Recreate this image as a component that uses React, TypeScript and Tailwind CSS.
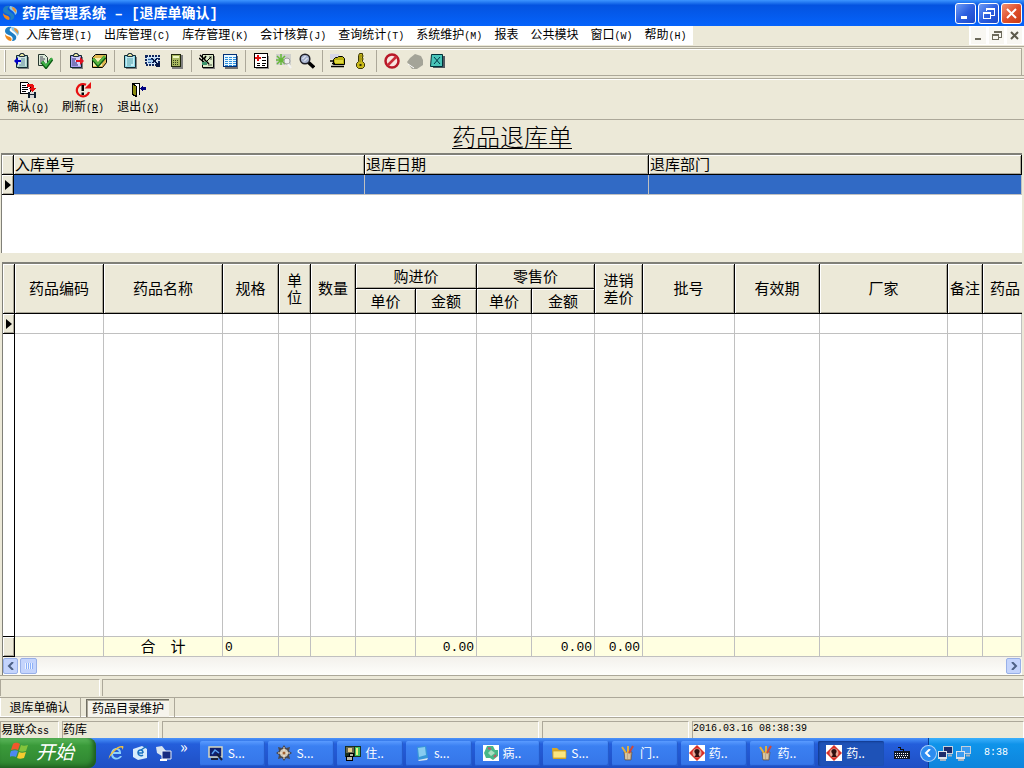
import React from 'react';

interface MenuEntry {
  label: string;
  hotkey?: string;
}

interface Tool {
  name: string;
  icon: React.ReactNode;
}

interface Column {
  key: string;
  title: React.ReactNode;
  total?: string;
  totalClass?: string;
}

const svgProps = { width: 16, height: 16, viewBox: '0 0 16 16', 'aria-hidden': true } as const;

// ---------- icons ----------

const AppLogo = () => (
  <svg {...svgProps}>
    <path d="M8 1C4 0 1 2 1 5c0 3 4 4 6 5 2 1 2 3 1 5 3 0 5-2 4-5-1-2-4-3-6-5C5 4 6 2 8 1z" fill="#1f7fc4" />
    <path d="M8 1c-1 1-1 3 1 4s4 3 4 5c2-1 3-4 1-6C12 2 10 1 8 1z" fill="#8cc8e8" />
    <path d="M1 8c0 4 3 7 6 7 1-1 1-3-1-4-2-1-4-1-5-3z" fill="#f08a1c" />
    <path d="M10 2c3 0 5 3 4 6-1-2-4-3-4-6z" fill="#e8953a" />
  </svg>
);

const Clipboard = ({ fill, children }: { fill: string; children?: React.ReactNode }) => (
  <svg {...svgProps}>
    <path d="M4 4h11v12H4z" fill="#808080" />
    <path d="M2.500 2.500h11v12h-11z" fill={fill} stroke="#102830" />
    <path d="M4 4h8v9H4z" fill="#fff" opacity=".5" />
    <path d="M5.500 3.500v-2h1v-1h3v1h1v2z" fill="#e8e8a0" stroke="#203040" />
    {children}
  </svg>
);

const toolGroups: Tool[][] = [
  [
    {
      name: '入库',
      icon: (
        <Clipboard fill="#a8cfc8">
          <path d="M7 6h4M7 8h4M7 10h4M5 12h6" stroke="#5c8c98" />
          <path d="M0 8l4-4v3h3v2H4v3z" fill="#0000c8" />
        </Clipboard>
      ),
    },
    {
      name: '入库审核',
      icon: (
        <svg {...svgProps}>
          <path d="M1.500 1.500h6l3 3v8h-9z" fill="#dcead8" stroke="#283830" />
          <path d="M3 4h3M3 6h5M3 8h4M3 10h3" stroke="#445" />
          <path d="M5 9l4 5 6-8" fill="none" stroke="#0b5a12" strokeWidth="3.500" />
          <path d="M5 8.500l4 4.500 6-8" fill="none" stroke="#3fb348" strokeWidth="2" />
        </svg>
      ),
    },
  ],
  [
    {
      name: '出库',
      icon: (
        <Clipboard fill="#a8a0f0">
          <path d="M4 6h4M4 8h3M4 10h5M4 12h6" stroke="#202080" />
          <path d="M8 7h4V4l4 4-4 4V9H8z" fill="#e01020" />
        </Clipboard>
      ),
    },
    {
      name: '出库审核',
      icon: (
        <svg {...svgProps}>
          <path d="M1.500 4.500l3-3h11v8l-4 5h-10z" fill="#e0b850" stroke="#000" />
          <path d="M2 5h9v8H2z" fill="#f8efb0" />
          <path d="M2 6l5 6 7-8" fill="none" stroke="#0b5a12" strokeWidth="3.500" />
          <path d="M2 5.500l5 5.500 7-8" fill="none" stroke="#58b840" strokeWidth="2" />
        </svg>
      ),
    },
  ],
  [
    {
      name: '库存',
      icon: (
        <Clipboard fill="#8cd8e8">
          <path d="M5 6h6M5 8h6M5 10h6M5 12h4" stroke="#50a0a8" />
        </Clipboard>
      ),
    },
    {
      name: '盘点',
      icon: (
        <svg {...svgProps} shapeRendering="crispEdges">
          <path d="M1 3h13v9H1z" fill="#d0e4f8" stroke="#102860" strokeWidth="2" strokeDasharray="2 1" />
          <path d="M3 5h8v5H3z" fill="#a8d0f0" />
          <path d="M3 6h4M3 9h3M6 5l6 6" stroke="#3060a0" />
          <path d="M7 5l6 7M12 5l-4 5" stroke="#081848" strokeWidth="1.500" />
          <path d="M11 10h4v4h-4z" fill="#081848" />
        </svg>
      ),
    },
    {
      name: '核算',
      icon: (
        <svg {...svgProps} shapeRendering="crispEdges">
          <path d="M4 2h11v14H4z" fill="#808080" />
          <path d="M3 1h10v13H3z" fill="#20280c" />
          <path d="M4 2h8v11H4z" fill="#a8b860" />
          <path d="M5 3h6v2H5z" fill="#eef8c0" />
          <path d="M5 7h6M5 9h6M5 11h6" stroke="#34401a" strokeDasharray="1 1" />
        </svg>
      ),
    },
  ],
  [
    {
      name: '调价',
      icon: (
        <svg {...svgProps}>
          <path d="M4 3h12v13H4z" fill="#808080" />
          <path d="M3.500 1.500h11v13h-11z" fill="#dcebc8" stroke="#000" />
          <path d="M10 4h3M11 6h2M9 12h4" stroke="#485040" />
          <path d="M1 2l6 6M7 3L5 6l5 5M0 5l6 5" stroke="#000" strokeWidth="1.500" fill="none" />
          <path d="M3 9h5v3H3z" fill="#3d946c" />
          <path d="M8 8l4-4" stroke="#000" />
        </svg>
      ),
    },
    {
      name: '明细表',
      icon: (
        <svg {...svgProps} shapeRendering="crispEdges">
          <path d="M3 3h13v13H3z" fill="#707070" />
          <path d="M1 1h14v13H1z" fill="#003078" />
          <path d="M2 2h12v11H2z" fill="#e8f8ff" />
          <path d="M3 4h3M7 4h3M11 4h3M3 6h3M7 6h3M11 6h3M3 8h3M7 8h3M11 8h3M3 10h3M7 10h3M11 10h3M3 12h3M7 12h3M11 12h3" stroke="#2c90e0" />
        </svg>
      ),
    },
  ],
  [
    {
      name: '新单据',
      icon: (
        <svg {...svgProps} shapeRendering="crispEdges">
          <path d="M3 3h13v13H3z" fill="#909090" />
          <path d="M1.500.5h13v14h-13z" fill="#fff" stroke="#000" />
          <path d="M2 4h6v2H2zM4 2h2v6H4z" fill="#e01010" />
          <path d="M9 4h4M9 7h4M4 10h3M9 10h4M4 12h3M9 12h3" stroke="#000" />
        </svg>
      ),
    },
    {
      name: '查找药品',
      icon: (
        <svg {...svgProps}>
          <path d="M0 1h15v11H0z" fill="#cfd0cc" />
          <path d="M1 3l8 8M9 3l-8 8M5 1v11M0 7h10" stroke="#66b838" strokeWidth="1.500" />
          <circle cx="11" cy="8" r="3" fill="#eee" stroke="#a0a0a0" />
          <path d="M12 11l3 4" stroke="#f4f4f4" strokeWidth="2" />
        </svg>
      ),
    },
    {
      name: '查询',
      icon: (
        <svg {...svgProps}>
          <path d="M9 9l6 5.500" stroke="#000" strokeWidth="3.500" />
          <circle cx="6" cy="6" r="4.800" fill="#a8b4d0" stroke="#202028" strokeWidth="1.500" />
          <path d="M3.500 6l3-3M5 8.500L8.500 5" stroke="#fff" />
        </svg>
      ),
    },
  ],
  [
    {
      name: '打开',
      icon: (
        <svg {...svgProps}>
          <path d="M0 1h9v5H0z" fill="#d8d8e8" />
          <path d="M3.500 6.500l2-2h2l1-1h4l2 2v6h-11z" fill="#b8b010" stroke="#000" />
          <path d="M5 7h8v3H5z" fill="#e0d840" />
          <path d="M0 8h3M2 10.500h3M1 13.500h13" stroke="#000" strokeWidth="1.500" />
        </svg>
      ),
    },
    {
      name: '权限',
      icon: (
        <svg {...svgProps}>
          <path d="M6.500.5h3v8l2 2v3l-2 2h-4l-2-2v-3l2-2v-6z" fill="#c8b818" stroke="#3c3808" />
          <path d="M7 2v7M8 3h3M8 6h3" stroke="#8c8010" />
          <path d="M6.500 11h2v2h-2z" fill="#302c08" />
        </svg>
      ),
    },
  ],
  [
    {
      name: '取消',
      icon: (
        <svg {...svgProps}>
          <circle cx="8" cy="8" r="6.500" fill="#f8e4e0" stroke="#b81828" strokeWidth="2.500" />
          <path d="M3.500 12.500l9-9" stroke="#c82c38" strokeWidth="2.500" />
        </svg>
      ),
    },
    {
      name: '停止',
      icon: (
        <svg {...svgProps}>
          <path d="M0 9l3-4 5-4 6 2 2 4v5l-6 4H5z" fill="#a4a498" />
          <path d="M1 11l6 4" stroke="#fff" />
        </svg>
      ),
    },
    {
      name: '关闭窗口',
      icon: (
        <svg {...svgProps}>
          <path d="M4 3h11v12H3z" fill="#505860" />
          <path d="M1.500 1.500h11v12h-12z" fill="#48c4b8" stroke="#003038" />
          <path d="M4 4l6 7M10 4l-6 7" stroke="#003848" />
        </svg>
      ),
    },
  ],
];

const actions: { label: string; hotkey: string; icon: React.ReactNode }[] = [
  {
    label: '确认',
    hotkey: 'Q',
    icon: (
      <svg {...svgProps} shapeRendering="crispEdges">
        <path d="M.5.5h7l3 3v8H.5z" fill="#fff" stroke="#000" />
        <path d="M2 3h4M2 5h6M2 7h6M2 9h4" stroke="#000" />
        <path d="M7 2h5l2 2v2h2l-4 4-4-4h3V5H7z" fill="#e81010" />
        <path d="M8 10h8v6H8z" fill="#102030" />
        <path d="M10 13h4v3h-4zM10 10h4v2h-4z" fill="#d8d8d8" />
      </svg>
    ),
  },
  {
    label: '刷新',
    hotkey: 'R',
    icon: (
      <svg {...svgProps}>
        <path d="M11 2.800A6.200 6.200 0 1 0 14 10" fill="none" stroke="#e81010" strokeWidth="2.200" />
        <path d="M9.500 6.500H16V0z" fill="#e81010" />
        <path d="M6.500 3H9v6H6.500zM6.500 10.500H9V13H6.500z" fill="#000" />
      </svg>
    ),
  },
  {
    label: '退出',
    hotkey: 'X',
    icon: (
      <svg {...svgProps} shapeRendering="crispEdges">
        <path d="M2.500 12.500v-11h7v11" fill="#fff" stroke="#000" />
        <path d="M2.500 1.500l4 3v10l-4-2z" fill="#8c8c10" stroke="#000" />
        <path d="M10 6l3-3v2h3v3h-3v2z" fill="#000080" />
      </svg>
    ),
  },
];

const PaintCup = () => (
  <svg {...svgProps}>
    <path d="M4 7h8l-1 8H5z" fill="#c0a888" stroke="#604830" strokeWidth=".6" />
    <path d="M6 8L2 2M8 8V1" stroke="#e0b040" strokeWidth="2" />
    <path d="M9 8l4-7" stroke="#d04838" strokeWidth="2" />
    <path d="M6 8v6M9 9v5" stroke="#f0e0b8" />
  </svg>
);

const RedDiamond = () => (
  <svg {...svgProps}>
    <path d="M0 0h16v16H0z" fill="#fff" />
    <path d="M8 0l8 8-8 8-8-8z" fill="#d83028" />
    <circle cx="8" cy="8" r="4.500" fill="#e8a898" />
    <path d="M8 4c3 0 3 3 2 4s0 3 1 4H5c2-1 2-3 1-4s-1-4 2-4z" fill="#301010" />
  </svg>
);

const tasks: { label: string; icon: React.ReactNode; active?: boolean }[] = [
  {
    label: 'S...',
    icon: (
      <svg {...svgProps}>
        <path d="M1 2h13v10H1z" fill="#10206c" stroke="#d8d8c0" strokeWidth="1.500" />
        <path d="M4 9l3-4 4 3" stroke="#58a0f0" fill="none" strokeWidth="1.500" />
        <path d="M9 9l5 6M3 14h7" stroke="#182038" strokeWidth="2" />
      </svg>
    ),
  },
  {
    label: 'S...',
    icon: (
      <svg {...svgProps}>
        <path d="M8 0l2 3 4-1-1 4 3 2-3 2 1 4-4-1-2 3-2-3-4 1 1-4-3-2 3-2-1-4 4 1z" fill="#484850" />
        <circle cx="8" cy="8" r="4" fill="#d0c8b8" />
        <path d="M8 2v12M2 8h12" stroke="#f8e8d0" />
        <circle cx="8" cy="8" r="1.500" fill="#a06030" />
      </svg>
    ),
  },
  {
    label: '住..',
    icon: (
      <svg {...svgProps} shapeRendering="crispEdges">
        <path d="M0 1h16v11H0z" fill="#183020" />
        <path d="M10 2h5v9h-5z" fill="#40c060" />
        <path d="M11 3h2v7h-2z" fill="#f0f080" />
        <path d="M1 2h8v6H1z" fill="#686850" />
        <path d="M3 3h4v4H3z" fill="#e8d090" />
        <path d="M4 8h4v3H4zM1 11h6v4H1z" fill="#b8b8a8" stroke="#000" />
      </svg>
    ),
  },
  {
    label: 's...',
    icon: (
      <svg {...svgProps}>
        <path d="M3 2l9-1 2 12-10 2z" fill="#3898d8" />
        <path d="M4 3l7-1 1 8-7 2z" fill="#88ccf0" />
        <path d="M4 15l10-2-1 2-8 1z" fill="#d8e8f0" />
      </svg>
    ),
  },
  {
    label: '病..',
    icon: (
      <svg {...svgProps}>
        <path d="M0 0h16v16H0z" fill="#fff" />
        <path d="M4 1h6l2 4h3v6l-5 4-3-2H3L1 8z" fill="#48b888" />
        <path d="M5 8l3-3 4 3-4 3z" fill="#a8e0c0" />
        <path d="M5 3l3 1M11 12l2-2" stroke="#c05868" strokeWidth="2" />
      </svg>
    ),
  },
  {
    label: 'S...',
    icon: (
      <svg {...svgProps}>
        <path d="M1 3h5l2 2h7v9H2z" fill="#d8a828" />
        <path d="M2 6h13v7H2z" fill="#fbe580" stroke="#c89820" strokeWidth=".7" />
      </svg>
    ),
  },
  { label: '门..', icon: <PaintCup /> },
  { label: '药..', icon: <RedDiamond /> },
  { label: '药..', icon: <PaintCup /> },
  { label: '药..', icon: <RedDiamond />, active: true },
];

const NetworkIcon = ({ screen }: { screen: string }) => (
  <svg {...svgProps}>
    <path d="M5 1h10v8H5z" fill="#c4d0dc" />
    <path d="M6 2h8v6H6z" fill={screen} />
    <path d="M0 6h9v8H0z" fill="#dce4ec" />
    <path d="M1 7h7v5H1z" fill={screen} />
    <path d="M10 10.500h4M2 15h6" stroke="#a8b4c0" strokeWidth="2" />
  </svg>
);

// ---------- data ----------

const menus: MenuEntry[] = [
  { label: '入库管理', hotkey: 'I' },
  { label: '出库管理', hotkey: 'C' },
  { label: '库存管理', hotkey: 'K' },
  { label: '会计核算', hotkey: 'J' },
  { label: '查询统计', hotkey: 'T' },
  { label: '系统维护', hotkey: 'M' },
  { label: '报表' },
  { label: '公共模块' },
  { label: '窗口', hotkey: 'W' },
  { label: '帮助', hotkey: 'H' },
];

const columns: Column[] = [
  { key: 'code', title: '药品编码' },
  { key: 'name', title: '药品名称', total: '合　计', totalClass: 'text-center' },
  { key: 'spec', title: '规格', total: '0', totalClass: 'text-left' },
  { key: 'unit', title: <>单<br />位</> },
  { key: 'qty', title: '数量' },
  { key: 'buyPrice', title: '单价' },
  { key: 'buyAmount', title: '金额', total: '0.00', totalClass: 'text-right' },
  { key: 'sellPrice', title: '单价' },
  { key: 'sellAmount', title: '金额', total: '0.00', totalClass: 'text-right' },
  { key: 'diff', title: <>进销<br />差价</>, total: '0.00', totalClass: 'text-right' },
  { key: 'batch', title: '批号' },
  { key: 'expiry', title: '有效期' },
  { key: 'factory', title: '厂家' },
  { key: 'remark', title: '备注' },
  { key: 'drug', title: '药品' },
];

const gridFont = "font-['Liberation_Sans','Noto_Sans_CJK_SC',sans-serif] text-[15px]";
const headCell =
  'border-r border-b border-black bg-[#ece9d8] p-0 font-normal leading-[17px] shadow-[inset_1px_1px_0_#fff,inset_-1px_-1px_0_#aca899]';
const bodyCell = 'border-r border-b border-[#c0c0c0] p-0';

const HotKey = ({ children, underline }: { children: string; underline?: boolean }) => (
  <span className="font-['Liberation_Mono',monospace] text-[10px] leading-none">
    (<span className={underline ? 'underline' : ''}>{children}</span>)
  </span>
);

const RowPointer = () => (
  <svg width="6" height="10" viewBox="0 0 6 10" className="mx-auto" aria-hidden="true">
    <path d="M0 0l6 5-6 5z" fill="#000" />
  </svg>
);

// ---------- sections ----------

const TitleBar = () => {
  const button =
    'flex size-[21px] items-center justify-center rounded-[3px] border border-white bg-linear-to-br from-[#6f9bf5] via-[#2d5fe0] to-[#1c48c8]';
  return (
    <header className="flex h-[26px] shrink-0 items-center bg-linear-to-b from-[#3d95ff] via-[#0453e0] via-20% to-[#0563fb] pr-0.5 pl-0.5 text-white">
      <AppLogo />
      <h1 className="ml-1 flex-1 pb-0.5 text-sm leading-5 font-bold whitespace-pre">
        药库管理系统
        <span className="font-['Liberation_Mono',monospace] leading-none">{' – ['}</span>
        退库单确认
        <span className="font-['Liberation_Mono',monospace] leading-none">]</span>
      </h1>
      <div className="flex gap-0.5">
        <button type="button" aria-label="最小化" className={button}>
          <svg width="15" height="15" viewBox="0 0 15 15"><path d="M3 10h6v3H3z" fill="#fff" /></svg>
        </button>
        <button type="button" aria-label="还原" className={button}>
          <svg width="15" height="15" viewBox="0 0 15 15" shapeRendering="crispEdges">
            <path d="M5 2h8v7h-3M5 2v3M5 3h8" fill="none" stroke="#fff" />
            <path d="M2.500 6.500h7v6h-7zM2 7h8" fill="none" stroke="#fff" />
          </svg>
        </button>
        <button
          type="button"
          aria-label="关闭"
          className="flex size-[21px] items-center justify-center rounded-[3px] border border-white bg-linear-to-br from-[#f09070] via-[#e0502c] to-[#c83a10]"
        >
          <svg width="15" height="15" viewBox="0 0 15 15"><path d="M3 3l9 9M12 3l-9 9" stroke="#fff" strokeWidth="2" /></svg>
        </button>
      </div>
    </header>
  );
};

const MenuBar = () => {
  const button = 'flex h-[17px] w-[15px] items-center justify-center bg-[#f8f7f2]';
  return (
    <div className="flex h-[19px] shrink-0 justify-between">
      <nav className="flex items-start bg-white pl-1">
        <AppLogo />
        {menus.map((menu) => (
          <button key={menu.label} type="button" className="px-1.5 leading-4 whitespace-nowrap">
            {menu.label}
            {menu.hotkey && <HotKey>{menu.hotkey}</HotKey>}
          </button>
        ))}
      </nav>
      <div className="flex items-center gap-[3px] bg-white px-0.5">
        <button type="button" aria-label="最小化子窗口" className={button}>
          <svg width="11" height="11" viewBox="0 0 11 11"><path d="M2 8h6v2H2z" fill="#6c6a5c" /></svg>
        </button>
        <button type="button" aria-label="还原子窗口" className={button}>
          <svg width="11" height="11" viewBox="0 0 11 11" shapeRendering="crispEdges">
            <path d="M3 1h7v6H8M3 1v2M3 2h7" fill="none" stroke="#6c6a5c" />
            <path d="M1 4.500h6.500v5H1zM1 5.500h6" fill="none" stroke="#6c6a5c" />
          </svg>
        </button>
        <button type="button" aria-label="关闭子窗口" className={button}>
          <svg width="11" height="11" viewBox="0 0 11 11"><path d="M2 2l7 7M9 2l-7 7" stroke="#5c5a4c" strokeWidth="2" /></svg>
        </button>
      </div>
    </div>
  );
};

const ToolBar = () => (
  <div className="mt-px shrink-0 border-y border-[#aca899]">
    <div className="mt-px mr-0.5 flex h-[27px] items-center border-t border-r border-[#aca899] pb-0.5 pl-1 shadow-[inset_0_1px_0_#fff]">
      <div className="mr-1 h-[22px] w-0.5 border-r border-[#aca899] bg-white" />
      {toolGroups.map((group, index) => (
        <React.Fragment key={index}>
          {index > 0 && <div className="mr-[3px] ml-1 h-[22px] w-px bg-[#aca899]" />}
          {group.map((tool) => (
            <button
              key={tool.name}
              type="button"
              aria-label={tool.name}
              className="flex h-[22px] w-[23px] items-center justify-center"
            >
              {tool.icon}
            </button>
          ))}
        </React.Fragment>
      ))}
    </div>
  </div>
);

const ActionBar = () => (
  <div className="mt-0.5 flex h-[42px] shrink-0 gap-[13px] border-y border-[#aca899] pl-[7px] shadow-[inset_0_1px_0_#fff]">
    {actions.map((action) => (
      <button key={action.label} type="button" className="flex flex-col items-center pt-[3px] leading-[15px] whitespace-nowrap">
        {action.icon}
        <span>
          {action.label}
          <HotKey underline>{action.hotkey}</HotKey>
        </span>
      </button>
    ))}
  </div>
);

const OrderGrid = () => (
  <div className="mr-0.5 ml-px h-[100px] shrink-0 border-t-2 border-l border-[#808078] bg-white">
    <table className={`w-full table-fixed border-separate border-spacing-0 ${gridFont}`}>
      <colgroup>
        <col className="w-3" />
        <col className="w-[351px]" />
        <col className="w-[284px]" />
        <col />
      </colgroup>
      <thead>
        <tr className="h-5 text-left">
          <td className={headCell} />
          <th className={`${headCell} pl-px`}>入库单号</th>
          <th className={`${headCell} pl-px`}>退库日期</th>
          <th className={`${headCell} pl-px`}>退库部门</th>
        </tr>
      </thead>
      <tbody>
        <tr className="h-5">
          <td className={headCell}><RowPointer /></td>
          <td className="border-r border-b border-[#c0c0c0] bg-[#316ac5]" />
          <td className="border-r border-b border-[#c0c0c0] bg-[#316ac5]" />
          <td className="border-r border-b border-[#c0c0c0] bg-[#316ac5]" />
        </tr>
      </tbody>
    </table>
  </div>
);

const DetailGrid = () => (
  <div className="mx-0.5 mt-[9px] flex min-h-0 flex-1 flex-col border-t-2 border-l border-[#808078] bg-white">
    <div className="min-h-0 flex-1 overflow-hidden">
      <table className={`h-full w-full table-fixed border-separate border-spacing-0 ${gridFont}`}>
        <colgroup>
          <col className="w-3" />
          <col className="w-[89px]" />
          <col className="w-[119px]" />
          <col className="w-14" />
          <col className="w-8" />
          <col className="w-[45px]" />
          <col className="w-[60px]" />
          <col className="w-[61px]" />
          <col className="w-[55px]" />
          <col className="w-[63px]" />
          <col className="w-12" />
          <col className="w-[92px]" />
          <col className="w-[85px]" />
          <col className="w-32" />
          <col className="w-[35px]" />
          <col />
        </colgroup>
        <thead>
          <tr className="h-[25px]">
            <td rowSpan={2} className={headCell} />
            {columns.slice(0, 5).map((column) => (
              <th key={column.key} rowSpan={2} className={headCell}>{column.title}</th>
            ))}
            <th colSpan={2} className={headCell}>购进价</th>
            <th colSpan={2} className={headCell}>零售价</th>
            {columns.slice(9, 14).map((column) => (
              <th key={column.key} rowSpan={2} className={headCell}>{column.title}</th>
            ))}
            <th
              rowSpan={2}
              className="overflow-hidden border-b border-black bg-[#ece9d8] p-0 pl-[7px] text-left leading-[17px] font-normal whitespace-nowrap shadow-[inset_1px_1px_0_#fff,inset_0_-1px_0_#aca899]"
            >
              药品
            </th>
          </tr>
          <tr className="h-[25px]">
            {columns.slice(5, 9).map((column) => (
              <th key={column.key} className={headCell}>{column.title}</th>
            ))}
          </tr>
        </thead>
        <tbody>
          <tr className="h-5">
            <td className={headCell}><RowPointer /></td>
            {columns.map((column) => (
              <td key={column.key} className={bodyCell} />
            ))}
          </tr>
          <tr>
            <td className="border-r border-b border-black" />
            {columns.map((column) => (
              <td key={column.key} className={bodyCell} />
            ))}
          </tr>
        </tbody>
        <tfoot>
          <tr className="h-5 bg-[#ffffe1]">
            <td className={headCell} />
            {columns.map((column) => (
              <td key={column.key} className={`${bodyCell} px-0.5 leading-4 ${column.totalClass ?? ''}`}>
                {column.key === 'name' ? (
                  column.total
                ) : (
                  <span className="font-['Liberation_Mono',monospace] text-[13px]">{column.total}</span>
                )}
              </td>
            ))}
          </tr>
        </tfoot>
      </table>
    </div>
    <div className="flex h-[18px] shrink-0 items-center gap-0.5 bg-linear-to-b from-[#f3f1ec] to-[#fefefb] pr-px">
      <button type="button" aria-label="向左滚动" className="flex h-4 w-[15px] items-center justify-center rounded-xs border border-[#98b0e8] bg-[#c4d4fc]">
        <svg width="8" height="8" viewBox="0 0 8 8"><path d="M6 0L2 4l4 4" fill="none" stroke="#4d6185" strokeWidth="2" /></svg>
      </button>
      <button type="button" aria-label="滚动滑块" className="flex h-4 w-[17px] items-center justify-center rounded-xs border border-[#98b0e8] bg-[#c4d4fc]">
        <svg width="9" height="6" viewBox="0 0 9 6" shapeRendering="crispEdges"><path d="M1 0v6M3 0v6M5 0v6M7 0v6" stroke="#eef4fe" /><path d="M2 0v6M4 0v6M6 0v6M8 0v6" stroke="#8cb0f8" /></svg>
      </button>
      <button type="button" aria-label="向右滚动" className="ml-auto flex h-4 w-[15px] items-center justify-center rounded-xs border border-[#98b0e8] bg-[#c4d4fc]">
        <svg width="8" height="8" viewBox="0 0 8 8"><path d="M2 0l4 4-4 4" fill="none" stroke="#4d6185" strokeWidth="2" /></svg>
      </button>
    </div>
  </div>
);

const statusPanel = 'h-[17px] border-t border-l border-[#aca899] border-r border-r-white leading-[14px] whitespace-nowrap';

const BottomBars = () => (
  <div className="shrink-0">
    <div className="flex h-[22px] items-center gap-0.5 border-t border-[#aca899] pt-0.5">
      <div className={`${statusPanel} w-[100px]`} />
      <div className={`${statusPanel} flex-1`} />
    </div>
    <div className="flex h-[21px] items-center border-y border-[#aca899] shadow-[inset_0_-1px_0_#fff]">
      <button type="button" className="h-[19px] w-[81px] border-r border-l border-[#aca899] border-l-white pr-0.5 pb-0.5 leading-4">
        退库单确认
      </button>
      <button type="button" className="ml-[5px] h-[18px] w-[83px] border-t border-l border-[#716f64] bg-[#f6f4ec] leading-4 shadow-[inset_1px_1px_0_#aca899]">
        药品目录维护
      </button>
      <div className="ml-[5px] h-[19px] w-px bg-[#aca899]" />
    </div>
    <div className="flex h-5 items-center gap-[3px] pt-0.5">
      <div className={`${statusPanel} w-[59px]`}>
        易联众<span className="font-['Liberation_Mono',monospace] text-[10px] leading-none">ss</span>
      </div>
      <div className={`${statusPanel} w-[97px]`}>药库</div>
      <div className={`${statusPanel} w-[377px]`} />
      <div className={`${statusPanel} w-[147px]`} />
      <div className={`${statusPanel} flex-1 font-['Liberation_Mono',monospace] text-[10px]`}>2016.03.16 08:38:39</div>
    </div>
  </div>
);

const TaskBar = () => (
  <footer className="flex h-[30px] shrink-0 bg-linear-to-b from-[#4c94fa] via-[#245edb] via-20% to-[#1f4fc4] text-white">
    <button
      type="button"
      className="flex w-24 items-center gap-1.5 rounded-r-lg bg-linear-to-b from-[#5cb85c] via-[#3a9a3a] via-25% to-[#2f8430] pb-1 pl-2.5 shadow-[inset_-3px_-2px_4px_#1d5c1f]"
    >
      <svg width="20" height="18" viewBox="0 0 20 18" aria-hidden="true">
        <path d="M3 2c3-2 5-1 7 0L8 8C6 7 4 7 1 8z" fill="#f0582c" />
        <path d="M11 3c2 1 4 1 7 0l-2 6c-3 1-5 1-7 0z" fill="#84c43c" />
        <path d="M1 9c3-1 5-1 7 0l-2 6c-2-1-4-1-7 0z" fill="#4c88f0" />
        <path d="M9 10c2 1 4 1 7 0l-2 6c-3 1-5 1-7 0z" fill="#f8cc30" />
      </svg>
      <span className="text-[19px] leading-6 italic">开始</span>
    </button>
    <div className="flex items-center gap-2 pr-3 pl-3">
      <button type="button" aria-label="浏览器">
        <svg {...svgProps}>
          <path d="M13 9H5c0 4 5 5 7 2h2c-2 5-11 5-11-2 0-8 11-8 10 0zM5 7h6c-1-3-5-3-6 0z" fill="#8cd0fc" />
          <path d="M1 15C-1 11 8 0 15 1c1 1 0 3-1 4 1-4-3-3-7 1s-7 8-6 9z" fill="#f0c040" />
        </svg>
      </button>
      <button type="button" aria-label="邮件">
        <svg {...svgProps}>
          <path d="M1 4l9-3 5 3v9l-9 2-5-3z" fill="#d8ecfc" />
          <path d="M11 8H6c0 3 4 3 5 2M6 8c0-4 5-4 5 0M9 5l6-4" fill="none" stroke="#1870c0" strokeWidth="1.500" />
        </svg>
      </button>
      <button type="button" aria-label="显示桌面">
        <svg {...svgProps}>
          <path d="M0 2l6-1 4 5-4 5-5-3z" fill="#d8e4f0" />
          <path d="M6 6h9v8H6z" fill="#182c80" stroke="#e8f0fc" />
          <path d="M4 15h7" stroke="#fff" strokeWidth="2" />
        </svg>
      </button>
      <span className="self-start text-base leading-4">»</span>
    </div>
    <div className="flex min-w-0 flex-1 items-center gap-[3px]">
      {tasks.map((task, index) => (
        <button
          key={index}
          type="button"
          className={`flex h-[25px] min-w-0 flex-1 items-center gap-1 rounded-xs pl-2 whitespace-nowrap ${
            task.active
              ? 'bg-[#1e52b7] shadow-[inset_1px_1px_2px_#123a8c]'
              : 'bg-linear-to-b from-[#5a9bff] via-[#3b80f2] via-20% to-[#3575e8] shadow-[inset_-1px_-1px_1px_#2358c8]'
          }`}
        >
          <span className="shrink-0">{task.icon}</span>
          <span>{task.label}</span>
        </button>
      ))}
    </div>
    <div className="flex w-[44px] items-center justify-center pr-2">
      <svg width="16" height="14" viewBox="0 0 16 14" shapeRendering="crispEdges" aria-hidden="true">
        <path d="M4 1h2v2h3v2" fill="none" stroke="#101010" />
        <path d="M0 5h16v8H0z" fill="#101828" />
        <path d="M1 7h14M1 9h14M2 11h12" stroke="#fff" strokeDasharray="1 1" />
      </svg>
    </div>
    <div className="flex items-center bg-linear-to-b from-[#38b0fc] via-[#0f94ea] via-20% to-[#0e84dc] pr-4 shadow-[inset_1px_0_0_#0a3c94]">
      <button type="button" aria-label="显示隐藏的图标" className="-ml-2 flex size-[17px] items-center justify-center rounded-full border border-white/60 bg-[#2c8cf0]">
        <svg width="8" height="8" viewBox="0 0 8 8"><path d="M6 0L2 4l4 4" fill="none" stroke="#fff" strokeWidth="2" /></svg>
      </button>
      <span className="ml-px flex gap-0.5">
        <NetworkIcon screen="#1c2c6c" />
        <NetworkIcon screen="#3c9cf0" />
      </span>
      <span className="ml-3 font-['Liberation_Mono',monospace] text-[10px] leading-4">8:38</span>
    </div>
  </footer>
);

const App: React.FC = () => {
  return (
    <div className="flex h-screen w-full flex-col overflow-hidden bg-[#ece9d8] font-['Noto_Sans_CJK_SC',sans-serif] text-xs text-black">
      <TitleBar />
      <MenuBar />
      <ToolBar />
      <ActionBar />
      <h2 className="flex h-[33px] shrink-0 items-center justify-center pb-0.5 text-2xl leading-7 font-light underline decoration-1 underline-offset-2">
        药品退库单
      </h2>
      <OrderGrid />
      <DetailGrid />
      <BottomBars />
      <TaskBar />
    </div>
  );
};

export default App;
